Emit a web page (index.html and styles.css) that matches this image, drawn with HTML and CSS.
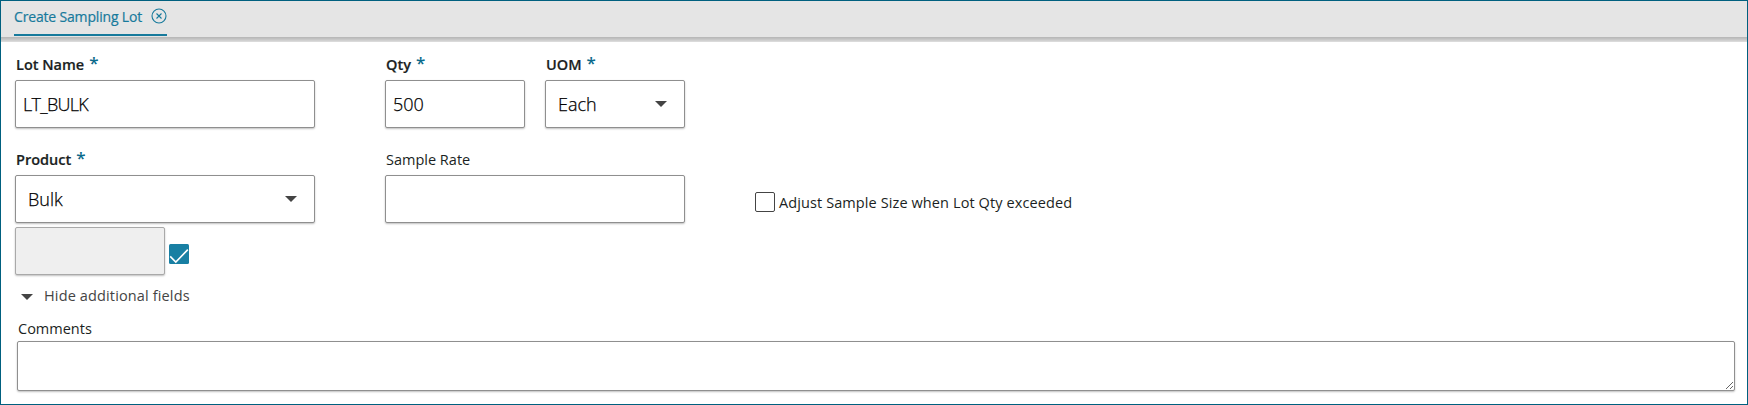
FILE: index.html
```html
<!DOCTYPE html>
<html lang="en">
<head>
<meta charset="utf-8">
<title>Create Sampling Lot</title>
<link rel="stylesheet" href="styles.css">
</head>
<body>
<div class="window">
  <header class="tabs">
    <div class="tab">
      <span class="tab-title">Create Sampling Lot</span>
      <svg class="close" viewBox="0 0 16 16"><circle cx="8" cy="8" r="7"/><path d="M5.5 5.5l5 5m0-5l-5 5"/></svg>
    </div>
  </header>
  <main class="form">
    <div class="row">
      <div class="field wide">
        <div class="label required"><span>Lot Name</span><span class="star">*</span></div>
        <div class="control"><span class="t-ltbulk">LT_BULK</span></div>
      </div>
      <div class="field narrow">
        <div class="label required"><span>Qty</span><span class="star">*</span></div>
        <div class="control"><span>500</span></div>
      </div>
      <div class="field narrow">
        <div class="label required"><span>UOM</span><span class="star">*</span></div>
        <div class="control select"><span>Each</span><svg class="arrow" viewBox="0 0 12 6"><path d="M0 0h12L6 6z"/></svg></div>
      </div>
    </div>
    <div class="row second">
      <div class="field wide">
        <div class="label required"><span>Product</span><span class="star">*</span></div>
        <div class="control select"><span>Bulk</span><svg class="arrow" viewBox="0 0 12 6"><path d="M0 0h12L6 6z"/></svg></div>
      </div>
      <div class="field wide">
        <div class="label"><span>Sample Rate</span></div>
        <div class="control"></div>
      </div>
      <div class="check-line"><span class="checkbox"></span><span class="t-adjust">Adjust Sample Size when Lot Qty exceeded</span></div>
    </div>
    <div class="auto-line">
      <div class="control disabled"></div>
      <svg class="checked" viewBox="0 0 20 20"><rect width="20" height="20" rx="1.5"/><path d="M1.2 12.4l5.6 5.7L18.8 5.6"/></svg>
    </div>
    <div class="toggle"><svg class="arrow" viewBox="0 0 12 6"><path d="M0 0h12L6 6z"/></svg><span class="t-hide">Hide additional fields</span></div>
    <div class="comments">
      <label class="label" for="comments"><span>Comments</span></label>
      <textarea id="comments" class="control area"></textarea>
    </div>
  </main>
</div>
</body>
</html>
```
FILE: styles.css
```css
* { box-sizing: border-box; }
body { margin: 0; font-family: "Open Sans", "Noto Sans", sans-serif; color: #1b1f23; background: #fff; }
.window { height: 405px; border: 1px solid #00607f; overflow: hidden; }
.tabs { height: 36px; padding-left: 13px; background: #e5e5e5; display: flex; box-shadow: 0 1px #b9b9b9, 0 2px #c0c0c0, 0 3px #c8c8c8, 0 4px #d0d0d0, 0 5px #dadada; }
.tab { width: 153px; height: 35px; border-bottom: 2px solid #177a9c; color: #177a9c; display: flex; justify-content: space-between; font-size: 14px; line-height: 32px; font-weight: 500; white-space: nowrap; }
.tab-title { letter-spacing: -.17px; -webkit-text-stroke: .2px; }
.close { width: 16px; height: 16px; margin-top: 7px; fill: none; stroke: #177a9c; stroke-width: 1.1; }
.form { padding: 18px 12px 0 14px; }
.row { display: flex; }
.second { margin-top: 22px; }
.field { display: flex; flex-direction: column; }
.wide { width: 300px; margin-right: 70px; }
.narrow { width: 140px; margin-right: 20px; }
.label { display: flex; height: 25px; padding-left: 1px; font-size: 14.5px; line-height: 20px; white-space: nowrap; }
.required { font-weight: 600; }
.required span:first-child { -webkit-text-stroke: .2px; }
.star { margin-left: 5px; margin-top: -2px; color: #0b6a8b; font-size: 17px; }
.control { height: 48px; border: 1px solid #8f8f8f; border-radius: 2px; background: #fff; box-shadow: 0 1px 2px rgba(0,0,0,.25); padding: 0 7px; font-size: 18px; line-height: 46px; color: #000; font-weight: 300; white-space: nowrap; -webkit-text-stroke: .25px; }
.t-ltbulk { letter-spacing: -.7px; }
.select { display: flex; align-items: center; justify-content: space-between; padding: 0 17px 0 12px; }
.select span { padding-bottom: 1px; }
.arrow { width: 12px; height: 6px; fill: #444; flex: none; }
.check-line { display: flex; align-items: center; gap: 4px; height: 20px; margin-top: 42px; font-size: 14.5px; white-space: nowrap; }
.t-adjust { letter-spacing: .1px; }
.checkbox { width: 20px; height: 20px; border: 1px solid #444; border-radius: 2px; }
.auto-line { display: flex; gap: 4px; margin-top: 4px; }
.disabled { width: 150px; background: #efefef; border-color: #a9a9a9; }
.checked { width: 20px; height: 20px; margin-top: 17px; fill: #187fa3; }
.checked path { fill: none; stroke: #fff; stroke-width: 1.6; }
.toggle { display: flex; align-items: center; height: 20px; margin-top: 12px; padding-left: 6px; gap: 11px; font-size: 14.5px; color: #444; white-space: nowrap; }
.t-hide { padding-bottom: 3px; letter-spacing: .14px; }
.comments { margin: 11px 0 0 2px; }
.comments .label { height: 23px; line-height: 22px; }
.area { display: block; width: 1718px; height: 50px; resize: vertical; outline: 0; }
```
